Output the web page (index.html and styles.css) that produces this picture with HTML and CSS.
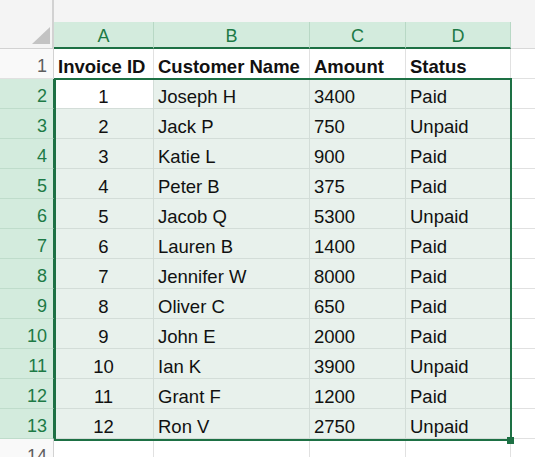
FILE: index.html
```html
<!DOCTYPE html>
<html>
<head>
<meta charset="utf-8">
<link rel="stylesheet" href="styles.css">
</head>
<body>
<div class="wrap">
  <div class="sheet">
    <div class="corner"><span class="tri"></span></div>
    <div class="strip"></div>
    <div class="ch">A</div><div class="ch">B</div><div class="ch">C</div><div class="ch">D</div><div class="ch-e"></div>

    <div class="rh">1</div>
    <div class="c bold">Invoice ID</div><div class="c bold">Customer Name</div><div class="c bold">Amount</div><div class="c bold">Status</div><div class="c e"></div>

    <div class="rh sel">2</div>
    <div class="c ctr active">1</div><div class="c s">Joseph H</div><div class="c s">3400</div><div class="c s">Paid</div><div class="c e"></div>

    <div class="rh sel">3</div>
    <div class="c s ctr">2</div><div class="c s">Jack P</div><div class="c s">750</div><div class="c s">Unpaid</div><div class="c e"></div>

    <div class="rh sel">4</div>
    <div class="c s ctr">3</div><div class="c s">Katie L</div><div class="c s">900</div><div class="c s">Paid</div><div class="c e"></div>

    <div class="rh sel">5</div>
    <div class="c s ctr">4</div><div class="c s">Peter B</div><div class="c s">375</div><div class="c s">Paid</div><div class="c e"></div>

    <div class="rh sel">6</div>
    <div class="c s ctr">5</div><div class="c s">Jacob Q</div><div class="c s">5300</div><div class="c s">Unpaid</div><div class="c e"></div>

    <div class="rh sel">7</div>
    <div class="c s ctr">6</div><div class="c s">Lauren B</div><div class="c s">1400</div><div class="c s">Paid</div><div class="c e"></div>

    <div class="rh sel">8</div>
    <div class="c s ctr">7</div><div class="c s">Jennifer W</div><div class="c s">8000</div><div class="c s">Paid</div><div class="c e"></div>

    <div class="rh sel">9</div>
    <div class="c s ctr">8</div><div class="c s">Oliver C</div><div class="c s">650</div><div class="c s">Paid</div><div class="c e"></div>

    <div class="rh sel">10</div>
    <div class="c s ctr">9</div><div class="c s">John E</div><div class="c s">2000</div><div class="c s">Paid</div><div class="c e"></div>

    <div class="rh sel">11</div>
    <div class="c s ctr">10</div><div class="c s">Ian K</div><div class="c s">3900</div><div class="c s">Unpaid</div><div class="c e"></div>

    <div class="rh sel">12</div>
    <div class="c s ctr">11</div><div class="c s">Grant F</div><div class="c s">1200</div><div class="c s">Paid</div><div class="c e"></div>

    <div class="rh sel">13</div>
    <div class="c s ctr">12</div><div class="c s">Ron V</div><div class="c s">2750</div><div class="c s">Unpaid</div><div class="c e"></div>

    <div class="rh">14</div>
    <div class="c"></div><div class="c"></div><div class="c"></div><div class="c"></div><div class="c e"></div>
  </div>
  <div class="selection"></div>
  <div class="handle"></div>
</div>
</body>
</html>
```

FILE: styles.css
```css
html, body {
  margin: 0;
  padding: 0;
  background: #ffffff;
  overflow: hidden;
}
body {
  font-family: "Liberation Sans", Arial, sans-serif;
  width: 535px;
  height: 457px;
}
.wrap {
  position: relative;
  width: 535px;
  height: 457px;
  overflow: hidden;
}
.sheet {
  display: grid;
  grid-template-columns: 54px 100px 156px 96px 105px 1fr;
  grid-template-rows: 22px 27px repeat(14, 30px);
}
.corner {
  grid-row: 1 / 3;
  grid-column: 1;
  background: #f4f4f4;
  border-right: 2px solid #d2d2d2;
  border-bottom: 1px solid #d2d2d2;
  position: relative;
  box-sizing: border-box;
}
.tri {
  position: absolute;
  left: 32px;
  top: 27px;
  width: 0;
  height: 0;
  border-left: 18px solid transparent;
  border-bottom: 17px solid #c3c3c3;
}
.strip {
  grid-row: 1;
  grid-column: 2 / 7;
  background: #f4f4f4;
}
.ch {
  background: #d3ebdd;
  color: #1d7a46;
  font-size: 18px;
  line-height: 20px;
  padding-top: 4px;
  text-align: center;
  border-right: 1px solid #b8d8c5;
  border-bottom: 2px solid #1d7044;
  box-sizing: border-box;
}
.ch-e {
  background: #f4f4f4;
  border-bottom: 1px solid #d8d8d8;
  box-sizing: border-box;
}
.rh {
  background: #f9f9f9;
  color: #5e5e5e;
  font-size: 18px;
  line-height: 20px;
  padding-top: 7px;
  padding-right: 6px;
  text-align: right;
  border-right: 1px solid #d2d2d2;
  border-bottom: 1px solid #e1e1e1;
  box-sizing: border-box;
}
.rh.sel {
  background: #d3ebdd;
  color: #1d7a46;
  border-right: 1px solid #1d7044;
  border-bottom: 1px solid #bfdccb;
}
.c {
  font-size: 18.5px;
  line-height: 21px;
  padding-top: 7px;
  padding-left: 4px;
  color: #111111;
  white-space: nowrap;
  overflow: hidden;
  border-right: 1px solid #e1e1e1;
  border-bottom: 1px solid #e1e1e1;
  box-sizing: border-box;
}
.c.bold {
  font-weight: bold;
  padding-left: 4px;
}
.c.s {
  background: #e8f1ec;
  border-color: #d3ddd8;
}
.c.active {
  background: #ffffff;
  border-right: 1px solid #d3ddd8;
  border-bottom: 1px solid #d3ddd8;
}
.c.ctr {
  text-align: center;
  padding-left: 0;
}
.c.e {
  border-right: none;
}
.selection {
  position: absolute;
  left: 54px;
  top: 78px;
  width: 458px;
  height: 363px;
  border: 2px solid #1d7044;
  box-sizing: border-box;
  pointer-events: none;
}
.handle {
  position: absolute;
  left: 507px;
  top: 437px;
  width: 7px;
  height: 7px;
  background: #1d7044;
}
```
